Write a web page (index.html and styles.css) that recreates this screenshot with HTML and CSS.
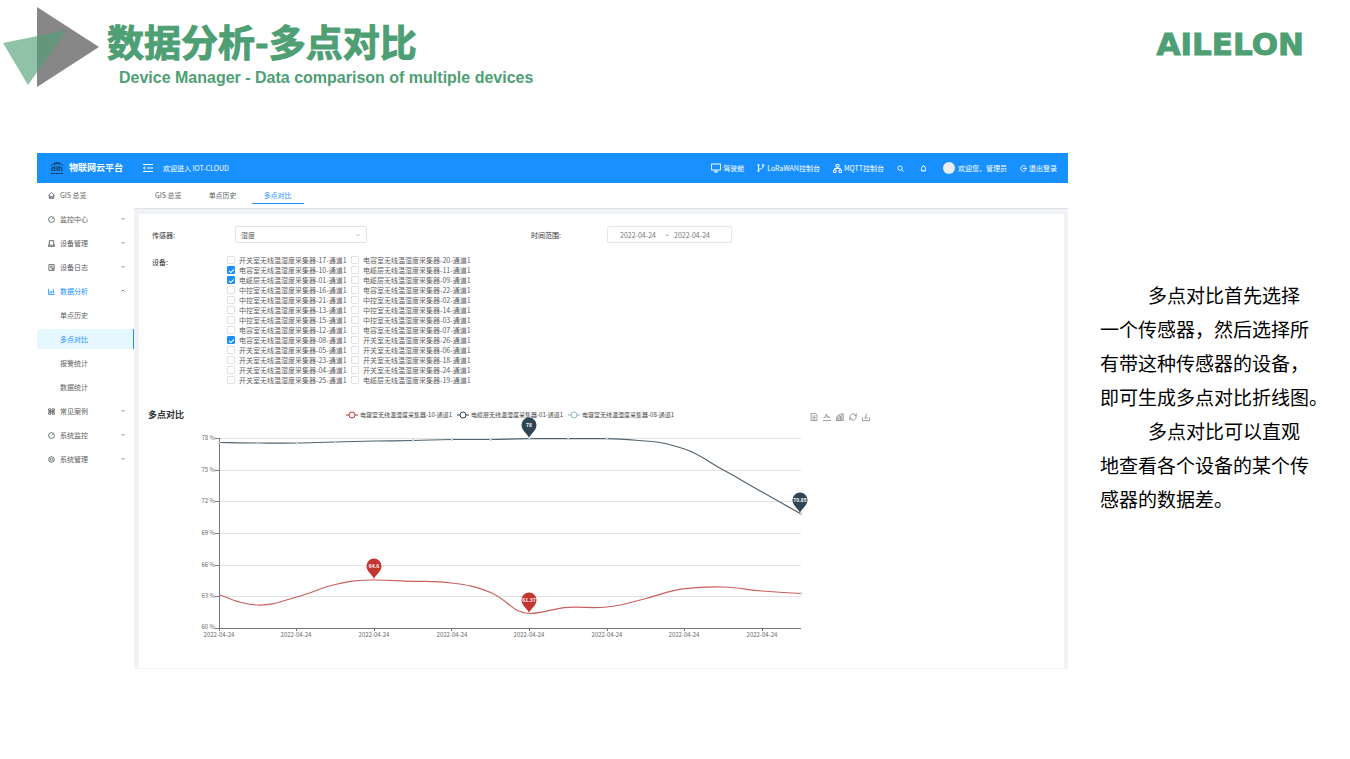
FILE: index.html
```html
<!DOCTYPE html>
<html lang="zh-CN">
<head>
<meta charset="utf-8">
<title>数据分析-多点对比</title>
<link rel="stylesheet" href="styles.css">
</head>
<body>
<header class="slide-head">
  <svg class="mark" viewBox="0 0 96 80" aria-hidden="true">
    <path d="M34 0L96 40L34 80Z" fill="#878787"/>
    <path d="M0 36L64 23L25 78Z" fill="#4e9f74" fill-opacity=".63"/>
  </svg>
  <div class="titles">
    <h1>数据分析-多点对比</h1>
    <p class="subtitle">Device Manager - Data comparison of multiple devices</p>
  </div>
  <div class="brand">AILELON</div>
</header>

<main class="slide-body">
  <section class="app">
    <div class="topbar">
      <div class="logo">
        <svg class="logo-mark" viewBox="0 0 16 14" aria-hidden="true">
          <path d="M2 5A7 7 0 0 1 14 5M5 4A4 4 0 0 1 11 4" fill="none" stroke="#12365f" stroke-width="1"/>
          <text x="8" y="10" class="logo-word">dih</text>
          <path d="M2 12.500H14" stroke="#12365f" stroke-width="1" stroke-dasharray="2 .5"/>
        </svg>
        <span>物联网云平台</span>
      </div>
      <button class="bar-btn" aria-label="折叠菜单"><svg class="i10" viewBox="0 0 10 10"><path d="M0 1.500H10M4 5H10M0 8.500H10M2.500 3.500L.5 5L2.500 6.500"/></svg></button>
      <span class="welcome">欢迎进入 IOT-CLOUD</span>
      <nav class="bar-right">
        <a href="#"><svg class="i10" viewBox="0 0 10 10"><path d="M.5 1H9.500V7H.5ZM5 7V9M3 9H7"/></svg>驾驶舱</a>
        <a href="#"><svg class="i8" viewBox="0 0 8 8"><path d="M1.500 2V6M1.500 5C5 5 6 4 6 2"/><circle cx="1.500" cy="1.200" r=".8"/><circle cx="1.500" cy="6.800" r=".8"/><circle cx="6.200" cy="1.200" r=".8"/></svg>LoRaWAN控制台</a>
        <a href="#"><svg class="i9" viewBox="0 0 9 9"><path d="M3 .5H6V3H3ZM.5 6H3V8.500H.5ZM6 6H8.500V8.500H6ZM4.500 3V4.500M1.700 6V4.500H7.300V6"/></svg>MQTT控制台</a>
        <button class="bar-btn" aria-label="搜索"><svg class="i7" viewBox="0 0 8 8"><circle cx="3.500" cy="3.500" r="2.500"/><path d="M5.500 5.500L7.500 7.500"/></svg></button>
        <button class="bar-btn bell" aria-label="通知"><svg class="i7" viewBox="0 0 8 8"><path d="M1 6.500H7M1.800 6.500V3.500A2.200 2.200 0 0 1 6.200 3.500V6.500M4 .3V1.300M3.200 7.700H4.800"/></svg></button>
        <span class="user"><i class="avatar"></i>欢迎您，管理员</span>
        <a href="#"><svg class="i7" viewBox="0 0 8 8"><path d="M6.300 1.700A3.200 3.200 0 1 0 6.300 6.300M3.500 4H7.700M6.500 2.800L7.700 4L6.500 5.200"/></svg>退出登录</a>
      </nav>
    </div>

    <div class="app-body">
      <nav class="side">
        <a href="#"><svg class="i7" viewBox="0 0 8 8"><path d="M.5 4L4 .8L7.500 4M1.500 3.500V7.300H6.500V3.500M3 7V5H5V7"/></svg>GIS 总览</a>
        <a href="#"><svg class="i7" viewBox="0 0 8 8"><circle cx="4" cy="4" r="3.300"/><path d="M4 4L5.500 2.500M2 4H2.500"/></svg>监控中心<svg class="arrow" viewBox="0 0 6 6"><path d="M1.500 2L3 3.500L4.500 2"/></svg></a>
        <a href="#"><svg class="i7" viewBox="0 0 8 8"><path d="M1.500 .7H6.500V6H1.500ZM.5 7.300H7.500M.7 5V7.300M7.300 5V7.300"/></svg>设备管理<svg class="arrow" viewBox="0 0 6 6"><path d="M1.500 2L3 3.500L4.500 2"/></svg></a>
        <a href="#"><svg class="i7" viewBox="0 0 8 8"><path d="M1 .7H7V7.300H1ZM2.500 2.500H5.500M2.500 4H4M4.500 4.500H6V6H4.500Z"/></svg>设备日志<svg class="arrow" viewBox="0 0 6 6"><path d="M1.500 2L3 3.500L4.500 2"/></svg></a>
        <a href="#" class="open"><svg class="i7" viewBox="0 0 8 8"><path d="M.7 1V7.300H7.500M2.500 6V4M4.300 6V3M6.200 6V1.500"/></svg>数据分析<svg class="arrow" viewBox="0 0 6 6"><path d="M1.500 3.500L3 2L4.500 3.500"/></svg></a>
        <a href="#" class="sub">单点历史</a>
        <a href="#" class="sub current">多点对比</a>
        <a href="#" class="sub">报警统计</a>
        <a href="#" class="sub">数据统计</a>
        <a href="#"><svg class="i7" viewBox="0 0 8 8"><path d="M.7 1H3.300V3H.7ZM4.700 1H7.300V3H4.700ZM.7 5H3.300V7H.7ZM4.700 5H7.300V7H4.700ZM.7 4H7.300"/></svg>常见案例<svg class="arrow" viewBox="0 0 6 6"><path d="M1.500 2L3 3.500L4.500 2"/></svg></a>
        <a href="#"><svg class="i7" viewBox="0 0 8 8"><circle cx="4" cy="4" r="3.300"/><path d="M4 4L5.500 2.500M2 4H2.500"/></svg>系统监控<svg class="arrow" viewBox="0 0 6 6"><path d="M1.500 2L3 3.500L4.500 2"/></svg></a>
        <a href="#"><svg class="i7" viewBox="0 0 8 8"><path d="M4 .6L7 2.300V5.700L4 7.400L1 5.700V2.300Z"/><circle cx="4" cy="4" r="1.300"/></svg>系统管理<svg class="arrow" viewBox="0 0 6 6"><path d="M1.500 2L3 3.500L4.500 2"/></svg></a>
      </nav>

      <div class="content">
        <div class="tabs" role="tablist">
          <button role="tab">GIS 总览</button>
          <button role="tab">单点历史</button>
          <button role="tab" class="active" aria-selected="true">多点对比</button>
        </div>

        <div class="card">
          <form class="filters">
            <div class="row">
              <label class="name" for="sensor">传感器:</label>
              <div class="select-box">
                <select id="sensor"><option>湿度</option></select>
                <svg class="caret" viewBox="0 0 8 8" aria-hidden="true"><path d="M1 2.500L4 5.500L7 2.500"/></svg>
              </div>
              <label class="name range-name" for="from">时间范围:</label>
              <div class="range">
                <input id="from" type="text" value="2022-04-24"><span>~</span><input type="text" value="2022-04-24" aria-label="结束日期">
              </div>
            </div>
            <div class="row devices">
              <span class="name">设备:</span>
              <div class="checks">
                <label><input type="checkbox">开关室无线温湿度采集器-17-通道1</label>
                <label><input type="checkbox">电容室无线温湿度采集器-20-通道1</label>
                <label><input type="checkbox" checked>电容室无线温湿度采集器-10-通道1</label>
                <label><input type="checkbox">电缆层无线温湿度采集器-11-通道1</label>
                <label><input type="checkbox" checked>电缆层无线温湿度采集器-01-通道1</label>
                <label><input type="checkbox">电缆层无线温湿度采集器-09-通道1</label>
                <label><input type="checkbox">中控室无线温湿度采集器-16-通道1</label>
                <label><input type="checkbox">电容室无线温湿度采集器-22-通道1</label>
                <label><input type="checkbox">中控室无线温湿度采集器-21-通道1</label>
                <label><input type="checkbox">中控室无线温湿度采集器-02-通道1</label>
                <label><input type="checkbox">中控室无线温湿度采集器-13-通道1</label>
                <label><input type="checkbox">中控室无线温湿度采集器-14-通道1</label>
                <label><input type="checkbox">中控室无线温湿度采集器-15-通道1</label>
                <label><input type="checkbox">中控室无线温湿度采集器-03-通道1</label>
                <label><input type="checkbox">电容室无线温湿度采集器-12-通道1</label>
                <label><input type="checkbox">电容室无线温湿度采集器-07-通道1</label>
                <label><input type="checkbox" checked>电容室无线温湿度采集器-08-通道1</label>
                <label><input type="checkbox">开关室无线温湿度采集器-26-通道1</label>
                <label><input type="checkbox">开关室无线温湿度采集器-05-通道1</label>
                <label><input type="checkbox">开关室无线温湿度采集器-06-通道1</label>
                <label><input type="checkbox">开关室无线温湿度采集器-23-通道1</label>
                <label><input type="checkbox">开关室无线温湿度采集器-18-通道1</label>
                <label><input type="checkbox">开关室无线温湿度采集器-04-通道1</label>
                <label><input type="checkbox">开关室无线温湿度采集器-24-通道1</label>
                <label><input type="checkbox">开关室无线温湿度采集器-25-通道1</label>
                <label><input type="checkbox">电缆层无线温湿度采集器-19-通道1</label>
              </div>
            </div>
          </form>

          <div class="chart-head">
            <h2>多点对比</h2>
            <ul class="legend">
              <li class="red"><svg viewBox="0 0 12 8"><path d="M0 4H12"/><circle cx="6" cy="4" r="3"/></svg>电容室无线温湿度采集器-10-通道1</li>
              <li class="navy"><svg viewBox="0 0 12 8"><path d="M0 4H12"/><circle cx="6" cy="4" r="3"/></svg>电缆层无线温湿度采集器-01-通道1</li>
              <li class="teal"><svg viewBox="0 0 12 8"><path d="M0 4H12"/><circle cx="6" cy="4" r="3"/></svg>电容室无线温湿度采集器-08-通道1</li>
            </ul>
            <div class="tools">
              <button aria-label="数据视图"><svg viewBox="0 0 8 8"><path d="M1 .5H5.500L7 2V7.500H1ZM2.500 3H5.500M2.500 4.500H5.500M2.500 6H5.500"/></svg></button>
              <button aria-label="折线图"><svg viewBox="0 0 8 8"><path d="M0 7.500H8M.5 4.500H2L3.300 1L4.500 5L5.500 3.500L7 5"/></svg></button>
              <button aria-label="柱状图"><svg viewBox="0 0 8 8"><path d="M0 7.500H8M.5 7V4.500H1.800V7M3 7V3H4.500V7M5.800 7V.8H7.200V7M.5 3.500L5 .8"/></svg></button>
              <button aria-label="还原"><svg viewBox="0 0 8 8"><path d="M1 5A3.200 3.200 0 0 1 6 1.500L7 2.500M7 3A3.200 3.200 0 0 1 2 6.500L1 5.500M7.300 .5V2.600H5.200M.7 7.500V5.400H2.800"/></svg></button>
              <button aria-label="保存为图片"><svg viewBox="0 0 8 8"><path d="M.5 4.500V7.500H7.500V4.500M4 .5V5.500M2.300 4L4 5.700L5.700 4"/></svg></button>
            </div>
          </div>

          <svg class="chart" viewBox="0 0 925 248" role="img" aria-label="多点对比折线图">
            <path class="grid" d="M80 18.500H662M80 50.500H662M80 81.500H662M80 113.500H662M80 145.500H662M80 176.500H662"/>
            <path class="axis" d="M80.500 18V208.500H662M76 18.500H80M76 50.500H80M76 81.500H80M76 113.500H80M76 145.500H80M76 176.500H80M76 208.500H80M80.500 208V211M157.500 208V211M235.500 208V211M312.500 208V211M390.500 208V211M468.500 208V211M545.500 208V211M623.500 208V211"/>
            <g class="ticks ticks-y">
              <text x="76" y="20">78 %</text><text x="76" y="52">75 %</text><text x="76" y="83">72 %</text><text x="76" y="115">69 %</text><text x="76" y="147">66 %</text><text x="76" y="178">63 %</text><text x="76" y="209">60 %</text>
            </g>
            <g class="ticks ticks-x">
              <text x="80" y="217">2022-04-24</text><text x="157" y="217">2022-04-24</text><text x="235" y="217">2022-04-24</text><text x="313" y="217">2022-04-24</text><text x="390" y="217">2022-04-24</text><text x="468" y="217">2022-04-24</text><text x="545" y="217">2022-04-24</text><text x="623" y="217">2022-04-24</text>
            </g>
            <path class="line navy" d="M80 22.500C93 22.700 103 23 118.800 23S142 23.200 157.600 23S180 22.300 196.400 22S219 21.200 235.200 21S258 20.800 274 20.500S297 19.600 312.800 19.500S336 19.600 351.600 19.500S374 18.700 390.400 18.700S413 18.700 429.200 18.700S452 18.500 468 18.700S491 19.800 506.800 21S530 23.800 545.600 29S568.500 41.500 584.400 50S607 63 623.200 72L662 94"/>
            <path class="line red" d="M80 174.500C93 179.500 103 184.500 118.800 185S141.500 181.200 157.600 177S180.500 168 196.400 164.500S219 160 235.200 160S258 160.900 274 161.300S297 161 312.800 163S335.500 166.200 351.600 172.500S374 193.500 390.400 193.500S413 188 429.200 187.300S452 188.500 468 187S491 182.300 506.800 178.500S529.500 170.500 545.600 168.700S568 166.500 584.400 167S607 169.700 623.200 171S648 172.900 662 173.500"/>
            <g class="dots">
              <circle cx="80" cy="22.500" r="1"/><circle cx="118.800" cy="23" r="1"/><circle cx="157.600" cy="23" r="1"/><circle cx="196.400" cy="22" r="1"/><circle cx="274" cy="20.500" r="1"/><circle cx="312.800" cy="19.500" r="1"/><circle cx="351.600" cy="19.500" r="1"/><circle cx="390.400" cy="18.700" r="1"/><circle cx="429.200" cy="18.700" r="1"/><circle cx="468" cy="18.700" r="1"/><circle cx="662" cy="94" r="1"/><circle cx="662" cy="173.500" r="1"/>
            </g>
            <g class="pin navy" transform="translate(390 18)"><path d="M0 0C-1-4-7.500-7-7.500-13A7.500 7.500 0 0 1 7.500-13C7.500-7 1-4 0 0Z"/><text y="-11">78</text></g>
            <g class="pin navy" transform="translate(661 93)"><path d="M0 0C-1-4-7.500-7-7.500-13A7.500 7.500 0 0 1 7.500-13C7.500-7 1-4 0 0Z"/><text y="-11">70.85</text></g>
            <g class="pin red" transform="translate(235 159)"><path d="M0 0C-1-4-7.500-7-7.500-13A7.500 7.500 0 0 1 7.500-13C7.500-7 1-4 0 0Z"/><text y="-11">64.6</text></g>
            <g class="pin red" transform="translate(390 193)"><path d="M0 0C-1-4-7.500-7-7.500-13A7.500 7.500 0 0 1 7.500-13C7.500-7 1-4 0 0Z"/><text y="-11">61.37</text></g>
          </svg>
        </div>
      </div>
    </div>
  </section>

  <aside class="notes">
    <p>多点对比首先选择<br>一个传感器，然后选择所<br>有带这种传感器的设备，<br>即可生成多点对比折线图。</p>
    <p>多点对比可以直观<br>地查看各个设备的某个传<br>感器的数据差。</p>
  </aside>
</main>
</body>
</html>
```

FILE: styles.css
```css
* { box-sizing: border-box; }

body {
  margin: 0;
  background: #fff;
  font-family: "Noto Sans CJK SC", sans-serif;
  color: #000;
}

h1, h2, p, ul { margin: 0; padding: 0; }
a { color: inherit; text-decoration: none; }
button, input, select { font: inherit; color: inherit; border: 0; background: none; padding: 0; margin: 0; }
svg { display: block; fill: none; stroke: currentColor; flex: none; }
svg text { stroke: none; }

/* slide header */
.slide-head {
  display: flex;
  align-items: flex-start;
  padding: 7px 46px 0 3px;
  color: #4e9f74;
}
.mark { width: 96px; height: 80px; stroke: none; }
.titles { flex: 1; padding: 12px 0 0 8px; }
.titles h1 { font-size: 37px; line-height: 44px; font-weight: 700; -webkit-text-stroke: 1px currentColor; }
.subtitle {
  margin: 5px 0 0 12px;
  font: 700 16px/20px "Liberation Sans", sans-serif;
}
.brand {
  padding-top: 17px;
  font: 700 31px/40px "DejaVu Sans", sans-serif;
  -webkit-text-stroke: 1px currentColor;
}

.slide-body {
  display: grid;
  grid-template-columns: minmax(0, 1fr) 250px;
  gap: 32px;
  align-items: start;
  padding: 65px 0 0 37px;
}

.notes { padding-top: 125px; font-size: 19px; line-height: 34px; white-space: nowrap; }
.notes p { text-indent: 48px; }

/* application window */
.app { font-size: 7px; line-height: 10px; color: #606060; }

.topbar {
  display: flex;
  align-items: center;
  height: 30px;
  padding-right: 11px;
  background: #1890ff;
  color: #fff;
}
.logo {
  display: flex;
  align-items: center;
  gap: 4px;
  width: 106px;
  padding-left: 12px;
  font-size: 9px;
  line-height: 14px;
  font-weight: 700;
}
.logo-mark { width: 16px; height: 14px; }
.logo-word { fill: #12365f; font: 700 8px "Liberation Sans", sans-serif; text-anchor: middle; }
.welcome { margin-left: 10px; }
.bar-right { display: flex; align-items: center; gap: 13px; margin-left: auto; }
.bar-right a, .user { display: flex; align-items: center; gap: 2px; }
.bell { margin: 0 3px; }
.avatar { width: 12px; height: 12px; margin-right: 1px; border-radius: 50%; background: #e8eef3; }

.i10 { width: 10px; height: 10px; }
.i9 { width: 9px; height: 9px; }
.i8 { width: 8px; height: 8px; }
.i7 { width: 7px; height: 7px; }

.app-body { display: flex; }

.side { width: 97px; flex: none; background: #fff; }
.side a {
  display: flex;
  align-items: center;
  gap: 5px;
  height: 20px;
  margin: 2px 0 4px;
  padding: 0 8px 0 11px;
}
.side a.sub { padding-left: 23px; }
.side a.open { color: #1890ff; }
.side a.current { background: #e6f7ff; color: #1890ff; border-right: 1px solid #1890ff; }
.arrow { width: 6px; height: 6px; margin-left: auto; color: #888; }

.content { flex: 1; min-width: 0; background: #f0f2f5; padding-bottom: 1px; }

.tabs {
  display: flex;
  gap: 3px;
  height: 26px;
  padding: 0 0 4px 9px;
  background: #fff;
  border-bottom: 1px solid #dfe2e6;
}
.tabs button { padding: 3px 12px 0; border-bottom: 1px solid transparent; }
.tabs .active { color: #1890ff; border-color: #1890ff; }

.card { margin: 5px 4px 0 5px; padding-top: 12px; background: #fff; }

.filters { padding-left: 13px; }
.row { display: flex; align-items: center; }
.name { width: 83px; color: #333; }
.range-name { width: 76px; margin-left: 164px; }
.select-box {
  display: flex;
  align-items: center;
  width: 132px;
  height: 17px;
  padding: 0 5px;
  border: 1px solid #e2e2e2;
  border-radius: 2px;
}
.select-box select { flex: 1; appearance: none; outline: 0; }
.caret { width: 6px; height: 6px; color: #bbb; }
.range {
  display: flex;
  align-items: center;
  width: 125px;
  height: 17px;
  padding: 0 12px;
  border: 1px solid #e8e8e8;
  border-radius: 2px;
  color: #777;
}
.range input { width: 40px; }
.range span { width: 14px; text-align: center; }

.devices { align-items: flex-start; margin-top: 12px; }
.devices .name { width: 75px; padding-top: 2px; }
.checks { display: grid; grid-template-columns: 124px 124px; }
.checks label { display: flex; align-items: center; gap: 4px; height: 10px; white-space: nowrap; }
.checks input {
  appearance: none;
  width: 8px;
  height: 8px;
  border: 1px solid #e2e2e2;
  border-radius: 1px;
  background: #fff;
}
.checks input:checked {
  border-color: #1890ff;
  background: #1890ff;
  display: grid;
  place-items: center;
}
.checks input:checked::before {
  content: "";
  width: 4px;
  height: 2px;
  border: solid #fff;
  border-width: 0 0 1px 1px;
  transform: rotate(-45deg);
}

.chart-head { display: flex; align-items: center; height: 10px; margin-top: 25px; padding-left: 9px; }
.chart-head h2 { width: 198px; font-size: 9px; line-height: 12px; color: #333; }
.legend { display: flex; gap: 6px; list-style: none; font-size: 6px; line-height: 8px; color: #444; }
.legend li { display: flex; align-items: center; gap: 2px; width: 105px; white-space: nowrap; }
.legend svg { width: 12px; height: 8px; }
.legend .red svg { color: #c23531; }
.legend .navy svg { color: #2f4554; }
.legend .teal svg { color: #8db9be; }
.legend circle { fill: #fff; }
.tools { display: flex; gap: 5px; margin: 4px 0 0 137px; color: #888; }
.tools svg { width: 8px; height: 8px; stroke-width: .8; }

.chart { width: 100%; height: auto; overflow: visible; }
.grid { stroke: #e3e3e3; }
.axis { stroke: #777; }
.ticks { fill: #666; font-size: 6px; }
.ticks-y { text-anchor: end; }
.ticks-x { text-anchor: middle; }
.line { stroke-width: 1.2; }
.line.navy { stroke: #50636f; }
.line.red { stroke: #c9605e; }
.dots { fill: #fff; stroke: #8aa0a5; stroke-width: .5; }
.pin { stroke: none; }
.pin.navy { fill: #2f4554; }
.pin.red { fill: #c23531; }
.pin text { fill: #fff; font-size: 5px; font-weight: 700; text-anchor: middle; }
```
